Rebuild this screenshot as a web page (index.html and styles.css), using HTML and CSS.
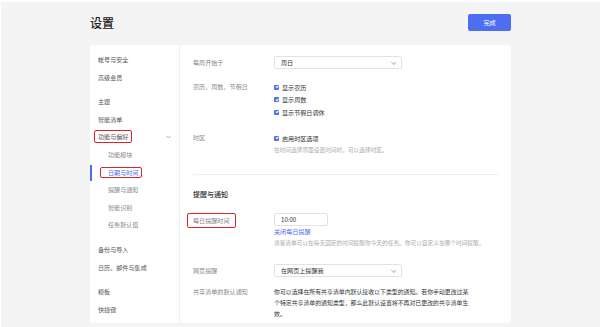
FILE: index.html
```html
<!DOCTYPE html>
<html lang="zh-CN">
<head>
    <meta charset="UTF-8">
    <title>设置</title>
    <link rel="stylesheet" href="styles.css">
</head>
<body>
    <div class="page">
        <div class="header">
            <h1>设置</h1>
            <button class="done-btn">完成</button>
        </div>

        <div class="card">
            <div class="sidebar">
                <div class="nav-group">
                    <div class="nav-item">帐号与安全</div>
                    <div class="nav-item">高级会员</div>
                </div>
                <div class="nav-group">
                    <div class="nav-item">主题</div>
                    <div class="nav-item">智能清单</div>
                    <div class="nav-item nav-parent">
                        <span class="mark mark-parent">功能与偏好</span>
                        <svg class="chevron" width="5" height="4" viewBox="0 0 5 4"><path d="M0.5 1 L2.5 3 L4.5 1" fill="none" stroke="#999" stroke-width="0.8"/></svg>
                    </div>
                    <div class="nav-item sub">功能模块</div>
                    <div class="nav-item sub active"><span class="mark mark-active">日期与时间</span></div>
                    <div class="nav-item sub">提醒与通知</div>
                    <div class="nav-item sub">智能识别</div>
                    <div class="nav-item sub">任务默认值</div>
                </div>
                <div class="nav-group">
                    <div class="nav-item">备份与导入</div>
                    <div class="nav-item">日历、邮件与集成</div>
                </div>
                <div class="nav-group">
                    <div class="nav-item">模板</div>
                    <div class="nav-item">快捷键</div>
                </div>
            </div>

            <div class="content">
                <div class="row row-week">
                    <div class="label">每周开始于</div>
                    <div class="value">
                        <div class="select">周日<span class="caret"></span></div>
                    </div>
                </div>
                <div class="row row-cal">
                    <div class="label">农历、周数、节假日</div>
                    <div class="value">
                        <div class="check"><span class="box"></span>显示农历</div>
                        <div class="check"><span class="box"></span>显示周数</div>
                        <div class="check"><span class="box"></span>显示节假日调休</div>
                    </div>
                </div>
                <div class="row row-tz">
                    <div class="label">时区</div>
                    <div class="value">
                        <div class="check"><span class="box"></span>启用时区选项</div>
                        <div class="hint">在时间选择界面设置时间时，可以选择时区。</div>
                    </div>
                </div>

                <div class="divider"></div>

                <h3 class="section-title">提醒与通知</h3>

                <div class="row row-daily">
                    <div class="label"><span class="mark mark-label">每日提醒时间</span></div>
                    <div class="value">
                        <div class="input">10:00</div>
                        <a class="link">关闭每日提醒</a>
                        <div class="hint hint-wide">滴答清单可以在每天固定的时间提醒你今天的任务。你可以自定义在哪个时间提醒。</div>
                    </div>
                </div>
                <div class="row row-web">
                    <div class="label">网页提醒</div>
                    <div class="value">
                        <div class="select">在网页上提醒我<span class="caret"></span></div>
                    </div>
                </div>
                <div class="row row-share">
                    <div class="label">共享清单的默认通知</div>
                    <div class="value">
                        <p class="desc">你可以选择在所有共享清单内默认接收以下类型的通知。若你手动更改过某个特定共享清单的通知类型，那么此默认设置将不再对已更改的共享清单生效。</p>
                    </div>
                </div>
            </div>
        </div>
    </div>
</body>
</html>
```

FILE: styles.css
```css
html {
    background: #fff;
}
body {
    margin: 2px 0 0 1px;
    height: 325px;
    overflow: hidden;
    background-color: #f4f4f4;
    font-family: "Noto Sans CJK SC", "Noto Sans", sans-serif;
    font-size: 6.1px;
    color: #333;
}
.page {
    width: 421px;
    margin-left: 89px;
}
.header {
    display: flex;
    justify-content: space-between;
    align-items: center;
    height: 41px;
    margin-bottom: 2px;
}
.header h1 {
    margin: 0;
    font-size: 12px;
    font-weight: 500;
    color: #222;
    line-height: 12px;
}
.done-btn {
    width: 43px;
    height: 17px;
    padding: 0;
    background-color: #4e6ef2;
    color: #fff;
    border: none;
    border-radius: 2px;
    font-family: inherit;
    font-size: 6.1px;
}
.card {
    display: flex;
    background: #fff;
    border-radius: 4px;
    height: 278px;
    overflow: hidden;
}
.sidebar {
    width: 89px;
    border-right: 1px solid #eee;
    padding-top: 6px;
    flex-shrink: 0;
}
.nav-group {
    margin-bottom: 7px;
}
.nav-item {
    position: relative;
    height: 17.6px;
    line-height: 17.6px;
    padding-left: 8px;
    color: #555;
}
.nav-item.sub {
    padding-left: 18px;
    color: #888;
}
.nav-item.active {
    color: #4e6ef2;
}
.nav-item.active::before {
    content: "";
    position: absolute;
    left: 0;
    top: 1px;
    width: 2px;
    height: 16px;
    background: #4e6ef2;
}
.chevron {
    position: absolute;
    right: 8px;
    top: 7px;
}
.mark {
    display: inline-block;
    line-height: 9px;
    border: 1.5px solid #e02424;
    border-radius: 2px;
}
.mark-parent {
    padding: 1px 3px;
    margin-left: -4px;
}
.mark-active {
    padding: 0 3px 0 7px;
    margin-left: -8px;
}
.mark-label {
    padding: 2px 5px;
    margin-left: -6px;
}
.content {
    flex: 1;
    padding: 11px 13px 0 13px;
}
.row {
    display: flex;
}
.label {
    width: 81px;
    flex-shrink: 0;
    color: #888;
    line-height: 12.5px;
}
.value {
    flex: 1;
}
.select {
    position: relative;
    width: 120px;
    height: 11px;
    line-height: 11px;
    padding-left: 6px;
    border: 1px solid #e2e2e2;
    border-radius: 2px;
    color: #333;
}
.caret {
    position: absolute;
    right: 6px;
    top: 3px;
    width: 2.5px;
    height: 2.5px;
    border-right: 0.7px solid #bbb;
    border-bottom: 0.7px solid #bbb;
    transform: rotate(45deg);
}
.row-week .label {
    line-height: 13px;
}
.row-cal {
    margin-top: 12px;
}
.check {
    display: flex;
    align-items: center;
    height: 12.5px;
    color: #333;
}
.box {
    position: relative;
    width: 5px;
    height: 5px;
    margin-right: 3px;
    border-radius: 1px;
    background: #4e6ef2;
}
.box::after {
    content: "";
    position: absolute;
    left: 1.7px;
    top: 0.6px;
    width: 1.2px;
    height: 2.4px;
    border-right: 0.7px solid #fff;
    border-bottom: 0.7px solid #fff;
    transform: rotate(45deg);
}
.row-tz {
    margin-top: 13.5px;
}
.hint {
    color: #aaa;
    line-height: 10px;
    font-size: 5.7px;
}
.divider {
    height: 1px;
    background: #eee;
    margin-top: 19px;
}
.section-title {
    margin: 13px 0 0;
    font-size: 7px;
    font-weight: 500;
    line-height: 12px;
    color: #333;
}
.row-daily {
    margin-top: 13px;
}
.row-daily .label {
    line-height: 13px;
}
.input {
    width: 46px;
    height: 11px;
    line-height: 11px;
    padding-left: 6px;
    border: 1px solid #e2e2e2;
    border-radius: 2px;
    color: #333;
}
.link {
    display: block;
    color: #4e6ef2;
    line-height: 11px;
    margin-top: 0.5px;
}
.hint-wide {
    line-height: 11px;
}
.row-web {
    margin-top: 15.5px;
}
.row-web .label {
    line-height: 13px;
}
.row-share {
    margin-top: 9.5px;
}
.row-share .label {
    line-height: 11px;
}
.desc {
    margin: 0;
    width: 196px;
    font-size: 5.9px;
    line-height: 11px;
    color: #333;
}
```
